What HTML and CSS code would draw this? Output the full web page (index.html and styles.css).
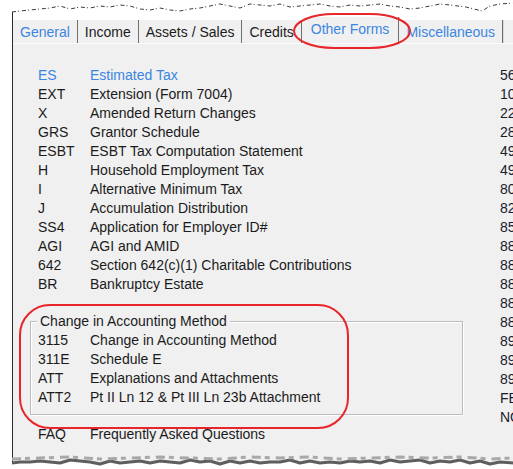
FILE: index.html
```html
<!DOCTYPE html>
<html lang="en">
<head>
<meta charset="utf-8">
<title>Other Forms</title>
<link rel="stylesheet" href="styles.css">
</head>
<body>
<div class="window">
  <div class="tabs">
    <div class="tab link">General</div>
    <div class="tab">Income</div>
    <div class="tab">Assets / Sales</div>
    <div class="tab">Credits</div>
    <div class="tab link selected">Other Forms</div>
    <div class="tab link">Miscellaneous</div>
  </div>
  <div class="page">
    <div class="forms">
      <div class="row link"><span class="code">ES</span><span>Estimated Tax</span></div>
      <div class="row"><span class="code">EXT</span><span>Extension (Form 7004)</span></div>
      <div class="row"><span class="code">X</span><span>Amended Return Changes</span></div>
      <div class="row"><span class="code">GRS</span><span>Grantor Schedule</span></div>
      <div class="row"><span class="code">ESBT</span><span>ESBT Tax Computation Statement</span></div>
      <div class="row"><span class="code">H</span><span>Household Employment Tax</span></div>
      <div class="row"><span class="code">I</span><span>Alternative Minimum Tax</span></div>
      <div class="row"><span class="code">J</span><span>Accumulation Distribution</span></div>
      <div class="row"><span class="code">SS4</span><span>Application for Employer ID#</span></div>
      <div class="row"><span class="code">AGI</span><span>AGI and AMID</span></div>
      <div class="row"><span class="code">642</span><span>Section 642(c)(1) Charitable Contributions</span></div>
      <div class="row"><span class="code">BR</span><span>Bankruptcy Estate</span></div>
      <div class="group">
        <div class="legend">Change in Accounting Method</div>
        <div class="row"><span class="code">3115</span><span>Change in Accounting Method</span></div>
        <div class="row"><span class="code">311E</span><span>Schedule E</span></div>
        <div class="row"><span class="code">ATT</span><span>Explanations and Attachments</span></div>
        <div class="row"><span class="code">ATT2</span><span>Pt II Ln 12 &amp; Pt III Ln 23b Attachment</span></div>
      </div>
      <div class="row faq"><span class="code">FAQ</span><span>Frequently Asked Questions</span></div>
    </div>
    <div class="refs">
      <div class="row">56</div>
      <div class="row">1041-T</div>
      <div class="row">2210</div>
      <div class="row">2848</div>
      <div class="row">4952</div>
      <div class="row">4970</div>
      <div class="row">8082</div>
      <div class="row">8275</div>
      <div class="row">8582</div>
      <div class="row">8822</div>
      <div class="row">8855</div>
      <div class="row">8868</div>
      <div class="row">8879</div>
      <div class="row">8886</div>
      <div class="row">8903</div>
      <div class="row">8908</div>
      <div class="row">8955</div>
      <div class="row">FBAR</div>
      <div class="row">NOL</div>
    </div>
  </div>

  <!-- torn paper edges -->
  <svg class="edge edge-top" width="513" height="22" viewBox="0 0 513 22">
    <polygon fill="#fff" points="0,0 513,0 513,3 500,4 490,6 482,11 474,9 466,7 458,6 450,5 440,4 430,6 420,8 410,9 400,7 390,6 380,4 370,5 360,6 350,5 340,7 330,6 320,4 310,5 300,6 290,7 280,4 270,6 260,5 250,4 240,8 230,6 220,4 210,6 200,8 190,9 180,11 170,10 160,8 150,10 140,9 130,6 120,5 110,7 100,6 90,8 80,7 70,9 60,6 50,8 40,9 30,10 20,11 12,12 0,12"/>
    <polyline fill="none" stroke="#3a3a3a" stroke-width="1" stroke-dasharray="4 2 1 3" points="12,12 20,11 30,10 40,9 50,8 60,6 70,9 80,7 90,8 100,6 110,7 120,5 130,6 140,9 150,10 160,8 170,10 180,11 190,9 200,8 210,6 220,4 230,6 240,8 250,4 260,5 270,6 280,4 290,7 300,6 310,5 320,4 330,6 340,7 350,5 360,6 370,5 380,4 390,6 400,7 410,9 420,8 430,6 440,4 450,5 458,6 466,7 474,9 482,11 490,6 500,4 513,3"/>
  </svg>
  <svg class="edge edge-bottom" width="513" height="24" viewBox="0 445 513 24">
    <polygon fill="#fff" points="0,469 513,469 513,464 500,463 490,465 480,462 470,464 460,461 450,463 440,462 430,464 420,461 410,462 400,463 390,461 380,464 370,462 360,463 350,462 340,464 330,463 320,464 310,462 300,464 290,461 280,463 270,463 260,464 250,462 240,464 230,462 220,465 210,462 200,463 190,461 180,464 170,463 160,462 150,464 140,462 130,463 120,464 110,462 100,465 90,463 80,462 70,461 60,464 50,463 40,462 30,463 20,463 12,464 0,464"/>
    <polyline fill="none" stroke="#5e5e5e" stroke-width="3" stroke-linejoin="round" points="12,463 20,462 30,462 40,461 50,462 60,463 70,460 80,461 90,462 100,464 110,461 120,463 130,462 140,461 150,463 160,461 170,462 180,463 190,460 200,462 210,461 220,464 230,461 240,463 250,461 260,463 270,462 280,462 290,460 300,463 310,461 320,463 330,462 340,463 350,461 360,462 370,461 380,463 390,460 400,462 410,461 420,460 430,463 440,461 450,462 460,460 470,463 480,461 490,464 500,462 513,463"/>
    <polyline fill="none" stroke="#a8a8a8" stroke-width="3" stroke-dasharray="9 4 5 6" points="12,459 40,458 70,457 100,459 130,458 160,457 190,458 220,459 250,457 280,458 310,457 340,459 370,458 400,457 430,458 460,457 490,459 513,458"/>
  </svg>

  <!-- red annotation marks -->
  <svg class="marks" width="513" height="469" viewBox="0 0 513 469">
    <rect x="294" y="14" width="116" height="34" rx="40" ry="17" fill="none" stroke="#e8252a" stroke-width="2"/>
    <rect x="20" y="305" width="328" height="123" rx="30" ry="30" fill="none" stroke="#e8252a" stroke-width="2"/>
  </svg>
</div>
</body>
</html>
```

FILE: styles.css
```css
html, body {
  margin: 0;
  padding: 0;
  background: #fff;
}

body {
  width: 513px;
  height: 469px;
  overflow: hidden;
  position: relative;
  font-family: "Liberation Sans", Arial, sans-serif;
  font-size: 14px;
  color: #1b1b1b;
}

.window {
  margin-left: 12px;
  height: 469px;
  border-left: 1px solid #2a2a2a;
  background: linear-gradient(#ffffff 0 20px, #f0f0f0 20px);
  padding-top: 17px;
  box-sizing: border-box;
  overflow: hidden;
}

.link {
  color: #3b86e2;
}

/* tab strip */
.tabs {
  display: flex;
  align-items: flex-end;
  height: 26px;
  border-bottom: 1px solid #ffffff;
  white-space: nowrap;
}

.tab {
  height: 23px;
  line-height: 25px;
  padding: 0 7px;
  background: #f0f0f0;
  border-right: 1px solid #6f6f6f;
  box-shadow: 1px 0 0 #d8d8d8;
  flex: none;
}

.tab.selected {
  height: 26px;
  line-height: 25px;
  padding: 0 9px;
}

/* page content */
.page {
  display: grid;
  grid-template-columns: 487px auto;
  padding-top: 22px;
}

.forms {
  padding-left: 25px;
}

.row {
  display: flex;
  height: 19px;
  line-height: 19px;
  white-space: nowrap;
}

.code {
  width: 52px;
  flex: none;
}

.group {
  margin: 27px 0 0 -8px;
  width: 433px;
  box-sizing: border-box;
  border: 1px solid #bcbcbc;
  box-shadow: 1px 1px 0 #ffffff, inset 1px 1px 0 #ffffff;
  padding: 0 0 7px 7px;
}

.legend {
  margin: -10px 0 0 -1px;
  padding: 0 3px;
  width: fit-content;
  height: 19px;
  line-height: 19px;
  background: #f0f0f0;
}

.faq {
  margin-top: 10px;
}

.refs .row {
  color: #1a1a2e;
}

/* overlays */
.edge,
.marks {
  position: absolute;
  left: 0;
  display: block;
}

.edge-top {
  top: 0;
}

.edge-bottom {
  top: 445px;
}

.marks {
  top: 0;
  pointer-events: none;
}
```
